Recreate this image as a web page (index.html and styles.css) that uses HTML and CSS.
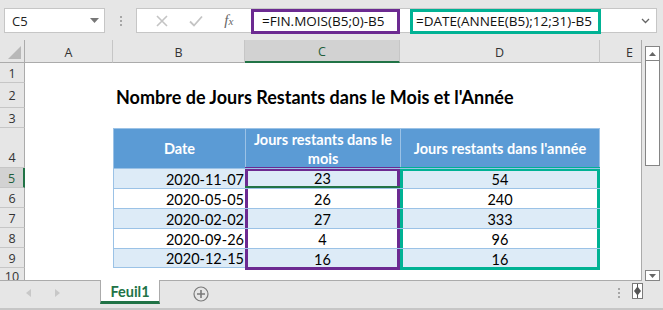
FILE: index.html
```html
<!DOCTYPE html>
<html lang="fr">
<head>
    <meta charset="UTF-8">
    <meta name="viewport" content="width=device-width, initial-scale=1.0">
    <title>Feuil1</title>
    <link rel="stylesheet" href="styles.css">
</head>
<body>
    <div class="app">
        <!-- Formula bar -->
        <div class="formula-bar">
            <div class="name-box">
                <span>C5</span>
                <svg class="caret" width="9" height="5" viewBox="0 0 9 5"><path d="M0 0h9L4.5 5z" fill="#777"/></svg>
            </div>
            <div class="grip"><i></i><i></i><i></i></div>
            <div class="formula-box">
                <div class="fx-buttons">
                    <svg width="12" height="12" viewBox="0 0 12 12"><path d="M1 1l10 10M11 1L1 11" stroke="#c4c4c4" stroke-width="1.6"/></svg>
                    <svg width="14" height="12" viewBox="0 0 14 12"><path d="M1 6.5l4 4L13 1.5" stroke="#c4c4c4" stroke-width="1.8" fill="none"/></svg>
                    <span class="fx">f<sub>x</sub></span>
                </div>
                <span class="formula purple">=FIN.MOIS(B5;0)-B5</span>
                <span class="formula teal">=DATE(ANNEE(B5);12;31)-B5</span>
                <svg class="chevron" width="9" height="6" viewBox="0 0 9 6"><path d="M1 1l3.5 3.5L8 1" stroke="#666" stroke-width="1.3" fill="none"/></svg>
            </div>
        </div>

        <!-- Worksheet -->
        <div class="sheet-area">
            <div class="sheet">
                <div class="hdr corner"><svg width="13" height="13" viewBox="0 0 13 13"><path d="M13 0v13H0z" fill="#b8b8b8"/></svg></div>
                <div class="hdr col">A</div>
                <div class="hdr col">B</div>
                <div class="hdr col active-col">C</div>
                <div class="hdr col">D</div>
                <div class="hdr col last">E</div>

                <div class="hdr row">1</div>
                <div></div><div></div><div></div><div></div><div></div>

                <div class="hdr row">2</div>
                <div></div>
                <div class="title">Nombre de Jours Restants dans le Mois et l'Année</div>

                <div class="hdr row">3</div>
                <div></div><div></div><div></div><div></div><div></div>

                <div class="hdr row tall">4</div>
                <div></div>
                <div class="th">Date</div>
                <div class="th">Jours restants dans le mois</div>
                <div class="th th-last">Jours restants dans l'année</div>
                <div></div>

                <div class="hdr row active-row">5</div>
                <div></div>
                <div class="td date band">2020-11-07</div>
                <div class="td band box-p top active-cell">23</div>
                <div class="td band box-t top">54</div>
                <div></div>

                <div class="hdr row">6</div>
                <div></div>
                <div class="td date">2020-05-05</div>
                <div class="td box-p">26</div>
                <div class="td box-t">240</div>
                <div></div>

                <div class="hdr row">7</div>
                <div></div>
                <div class="td date band">2020-02-02</div>
                <div class="td band box-p">27</div>
                <div class="td band box-t">333</div>
                <div></div>

                <div class="hdr row">8</div>
                <div></div>
                <div class="td date">2020-09-26</div>
                <div class="td box-p">4</div>
                <div class="td box-t">96</div>
                <div></div>

                <div class="hdr row">9</div>
                <div></div>
                <div class="td date band last-date">2020-12-15</div>
                <div class="td band box-p bottom">16</div>
                <div class="td band box-t bottom">16</div>
                <div></div>

                <div class="hdr row cut">10</div>
                <div></div><div></div><div></div><div></div><div></div>
            </div>

            <div class="vscroll">
                <div class="sb-btn"><svg width="7" height="4" viewBox="0 0 7 4"><path d="M0 4h7L3.5 0z" fill="#666"/></svg></div>
                <div class="sb-thumb"></div>
                <div class="sb-space"></div>
                <div class="sb-btn"><svg width="7" height="4" viewBox="0 0 7 4"><path d="M0 0h7L3.5 4z" fill="#666"/></svg></div>
            </div>
        </div>

        <!-- Sheet tabs -->
        <div class="tab-bar">
            <div class="tab-nav">
                <svg width="5" height="8" viewBox="0 0 5 8"><path d="M5 0v8L0 4z" fill="#c8c8c8"/></svg>
                <svg width="5" height="8" viewBox="0 0 5 8"><path d="M0 0v8l5-4z" fill="#c8c8c8"/></svg>
            </div>
            <div class="tab">Feuil1</div>
            <svg class="add-sheet" width="16" height="16" viewBox="0 0 16 16">
                <circle cx="8" cy="8" r="7" fill="none" stroke="#7a7a7a" stroke-width="1.2"/>
                <path d="M8 4v8M4 8h8" stroke="#7a7a7a" stroke-width="1.6"/>
            </svg>
            <div class="tab-fill"></div>
            <div class="grip small"><i></i><i></i><i></i></div>
            <svg class="split" width="11" height="16" viewBox="0 0 11 16">
                <rect x="0.5" y="0.5" width="10" height="15" fill="#fff" stroke="#7a7a7a"/>
                <path d="M2 8l3.5-4.5L9 8l-3.5 4.5z" fill="#555"/>
                <path d="M5.5 1v14" stroke="#555"/>
            </svg>
        </div>
    </div>
</body>
</html>
```

FILE: styles.css
```css
/* Spreadsheet window */
body {
    margin: 0;
    background: #fff;
    font-family: Lato, "Open Sans", sans-serif;
    color: #000;
}

.app {
    width: 663px;
    height: 310px;
    overflow: hidden;
    background: #e6e6e6;
}

/* Formula bar */
.formula-bar {
    height: 40px;
    display: flex;
    align-items: flex-start;
    padding: 8px 6px 0 4px;
    box-sizing: border-box;
    background: #e6e6e6;
}

.name-box {
    width: 101px;
    height: 25px;
    box-sizing: border-box;
    background: #fff;
    border: 1px solid #c6c6c6;
    display: flex;
    align-items: center;
    justify-content: space-between;
    padding: 0 5px 0 7px;
    font-family: "Open Sans", sans-serif;
    font-size: 13px;
    color: #222;
}

.grip {
    width: 31px;
    height: 25px;
    display: flex;
    flex-direction: column;
    align-items: center;
    justify-content: center;
    gap: 2px;
}

.grip i {
    width: 2px;
    height: 2px;
    background: #a6a6a6;
}

.formula-box {
    flex: 1;
    height: 25px;
    box-sizing: border-box;
    background: #fff;
    border: 1px solid #c6c6c6;
    display: flex;
    align-items: center;
    font-family: "Open Sans", sans-serif;
    font-size: 13.5px;
    color: #111;
}

.fx-buttons {
    width: 113px;
    display: flex;
    align-items: center;
    justify-content: space-around;
    padding: 0 6px 0 8px;
    box-sizing: border-box;
}

.fx {
    font-family: "Liberation Serif", serif;
    font-style: italic;
    font-size: 15px;
    color: #666;
}

.fx sub {
    font-size: 11px;
    vertical-align: 0;
}

.formula {
    height: 25px;
    box-sizing: border-box;
    display: flex;
    align-items: center;
    margin-top: 1px;
    white-space: nowrap;
}

.formula.purple {
    width: 149px;
    border: 3px solid #6c2a91;
    padding-left: 8px;
    margin-left: 1px;
}

.formula.teal {
    width: 191px;
    border: 3px solid #00b294;
    padding-left: 3px;
    margin-left: 10px;
}

.chevron {
    margin-left: auto;
    margin-right: 6px;
}

/* Grid */
.sheet-area {
    height: 241px;
    display: flex;
}

.sheet {
    width: 641px;
    display: grid;
    grid-template-columns: 25px 88px 132px 155px 200px 41px;
    grid-template-rows: 23px 20px 25px 20px 40px repeat(5, 20px) 12px;
    background: #fff;
    border-right: 1px solid #ababab;
    border-bottom: 1px solid #ababab;
    overflow: hidden;
}

.hdr {
    background: #e6e6e6;
    font-family: "Open Sans", sans-serif;
    font-size: 12.5px;
    color: #333;
    display: flex;
    align-items: center;
    justify-content: center;
    box-sizing: border-box;
}

.hdr.col {
    border-right: 1px solid #c6c6c6;
    border-bottom: 1px solid #ababab;
    padding-top: 2px;
}

.hdr.col.last {
    border-right: none;
    justify-content: flex-end;
    padding-right: 8px;
}

.hdr.corner {
    border-right: 1px solid #ababab;
    border-bottom: 1px solid #ababab;
    align-items: flex-end;
    justify-content: flex-end;
    padding: 0 3px 3px 0;
}

.hdr.row {
    border-right: 1px solid #ababab;
    border-bottom: 1px solid #c6c6c6;
    padding-top: 1px;
}

.hdr.tall {
    align-items: flex-end;
    padding-bottom: 1px;
}

.hdr.cut {
    align-items: flex-start;
    padding-top: 0;
    border-bottom: none;
}

.hdr.active-col {
    background: #d2d2d2;
    color: #1e5e3b;
    border-bottom: 2px solid #217346;
}

.hdr.active-row {
    background: #d2d2d2;
    color: #1e5e3b;
    border-right: 2px solid #217346;
}

/* Title and data table */
.title {
    grid-column: span 4;
    font-weight: bold;
    font-size: 18px;
    white-space: nowrap;
    padding: 3px 0 0 3px;
}

.th {
    background: #5b9bd5;
    color: #fff;
    font-weight: bold;
    font-size: 14.5px;
    line-height: 19px;
    text-align: center;
    display: flex;
    align-items: center;
    justify-content: center;
    padding: 0 6px;
    border-top: 1px solid #9bc2e6;
    border-left: 1px solid #9bc2e6;
    box-sizing: border-box;
}

.th-last {
    border-right: 1px solid #9bc2e6;
}

.td {
    font-size: 14.5px;
    display: flex;
    align-items: center;
    justify-content: center;
    padding-top: 1px;
    border-top: 1px solid #9bc2e6;
    box-sizing: border-box;
}

.td.band {
    background: #ddebf7;
}

.td.date {
    justify-content: flex-end;
    padding-right: 1px;
    border-left: 1px solid #9bc2e6;
}

.td.last-date {
    border-bottom: 1px solid #9bc2e6;
}

/* Thick borders drawn round columns C and D */
.box-p {
    box-shadow: inset 3px 0 #6c2a91, inset -3px 0 #6c2a91;
}

.box-p.top {
    box-shadow: inset 3px 0 #6c2a91, inset -3px 0 #6c2a91, inset 0 2px #6c2a91, 0 -1px #6c2a91;
}

.box-p.bottom {
    box-shadow: inset 3px 0 #6c2a91, inset -3px 0 #6c2a91, inset 0 -1px #6c2a91, 0 2px #6c2a91;
}

.box-t {
    box-shadow: inset 3px 0 #00b294, inset -3px 0 #00b294;
}

.box-t.top {
    box-shadow: inset 3px 0 #00b294, inset -3px 0 #00b294, inset 0 2px #00b294, 0 -1px #00b294;
}

.box-t.bottom {
    box-shadow: inset 3px 0 #00b294, inset -3px 0 #00b294, inset 0 -1px #00b294, 0 2px #00b294;
}

.active-cell {
    border-bottom: 2px solid #217346;
}

/* Vertical scrollbar */
.vscroll {
    flex: 1;
    display: flex;
    flex-direction: column;
    padding: 6px 3px 0 3px;
}

.sb-btn {
    height: 15px;
    box-sizing: border-box;
    background: #fff;
    border: 1px solid #858585;
    display: flex;
    align-items: center;
    justify-content: center;
}

.sb-btn:last-child {
    height: 11px;
}

.sb-thumb {
    height: 104px;
    background: #fff;
    border: 1px solid #858585;
    border-top: none;
}

.sb-space {
    flex: 1;
}

/* Sheet tabs */
.tab-bar {
    height: 29px;
    display: flex;
    align-items: flex-start;
    border-bottom: 2px solid #c6c6c6;
    box-sizing: border-box;
}

.tab-nav {
    width: 100px;
    height: 24px;
    display: flex;
    align-items: center;
    gap: 24px;
    padding-left: 26px;
    box-sizing: border-box;
}

.tab {
    width: 60px;
    height: 24px;
    box-sizing: border-box;
    background: #fff;
    border-left: 1px solid #ababab;
    border-right: 1px solid #ababab;
    border-bottom: 3px solid #217346;
    margin-top: -1px;
    color: #217346;
    font-weight: bold;
    font-size: 14.5px;
    display: flex;
    align-items: center;
    justify-content: center;
    padding-top: 2px;
}

.add-sheet {
    margin: 5px 0 0 33px;
}

.tab-fill {
    flex: 1;
}

.grip.small {
    width: 8px;
    height: 24px;
}

.split {
    margin: 2px 20px 0 9px;
}
```
